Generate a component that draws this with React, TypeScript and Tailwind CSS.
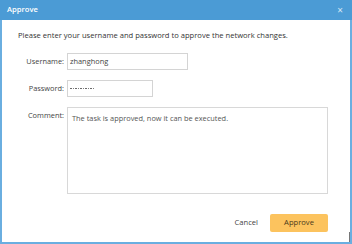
import React from "react";

export default function App() {
  return (
    <div className="relative w-[352px] h-[244px] bg-white flex flex-col" style={{ fontFamily: '"Open Sans", sans-serif' }}>
      <div className="h-[20px] bg-[#4b9bd5] flex items-center justify-between pl-[7px] pr-[9px] shrink-0">
        <span className="text-white text-[7.6px] font-semibold">Approve</span>
        <span className="text-[#d6e8f6] text-[10px] leading-none">×</span>
      </div>
      <div className="flex-1 border-x-2 border-b-2 border-[#6aaee0] flex flex-col">
        <div className="pl-[16px] pt-[10px] text-[7.6px] text-[#333] leading-[11px]">
          Please enter your username and password to approve the network changes.
        </div>
        <div className="flex items-center mt-[12px]">
          <div className="w-[65px] text-right pr-[3px] text-[7.4px] text-[#444]">Username:</div>
          <div className="w-[121px] h-[17px] border border-[#d4d4d4] flex items-center pl-[2px] text-[7.4px] text-[#444]">zhanghong</div>
        </div>
        <div className="flex items-center mt-[10px]">
          <div className="w-[65px] text-right pr-[3px] text-[7.4px] text-[#444]">Password:</div>
          <div className="w-[86px] h-[17px] border border-[#d4d4d4] flex items-center pl-[2px] gap-[1px]">
            {Array.from({ length: 10 }).map((_, i) => (
              <span key={i} className="w-[1.5px] h-[1.5px] rounded-full bg-[#555]" />
            ))}
          </div>
        </div>
        <div className="flex items-start mt-[10px]">
          <div className="w-[65px] text-right pr-[3px] text-[7.4px] text-[#444] pt-[3px]">Comment:</div>
          <div className="w-[261px] h-[87px] border border-[#d8d8d8] pl-[4px] pt-[5px] text-[7.4px] text-[#555]">The task is approved, now it can be executed.</div>
        </div>
        <div className="flex items-center justify-end mt-[20px] pr-[22px] gap-[12px]">
          <span className="text-[7.6px] text-[#444]">Cancel</span>
          <div className="w-[58px] h-[18px] rounded-[2px] bg-[#fcc35e] flex items-center justify-center text-[7.6px] text-[#4a3a1a]">Approve</div>
        </div>
      </div>
      <div className="absolute left-[349px] top-[232px] w-[1px] h-[10px] bg-[#777]" />
    </div>
  );
}
